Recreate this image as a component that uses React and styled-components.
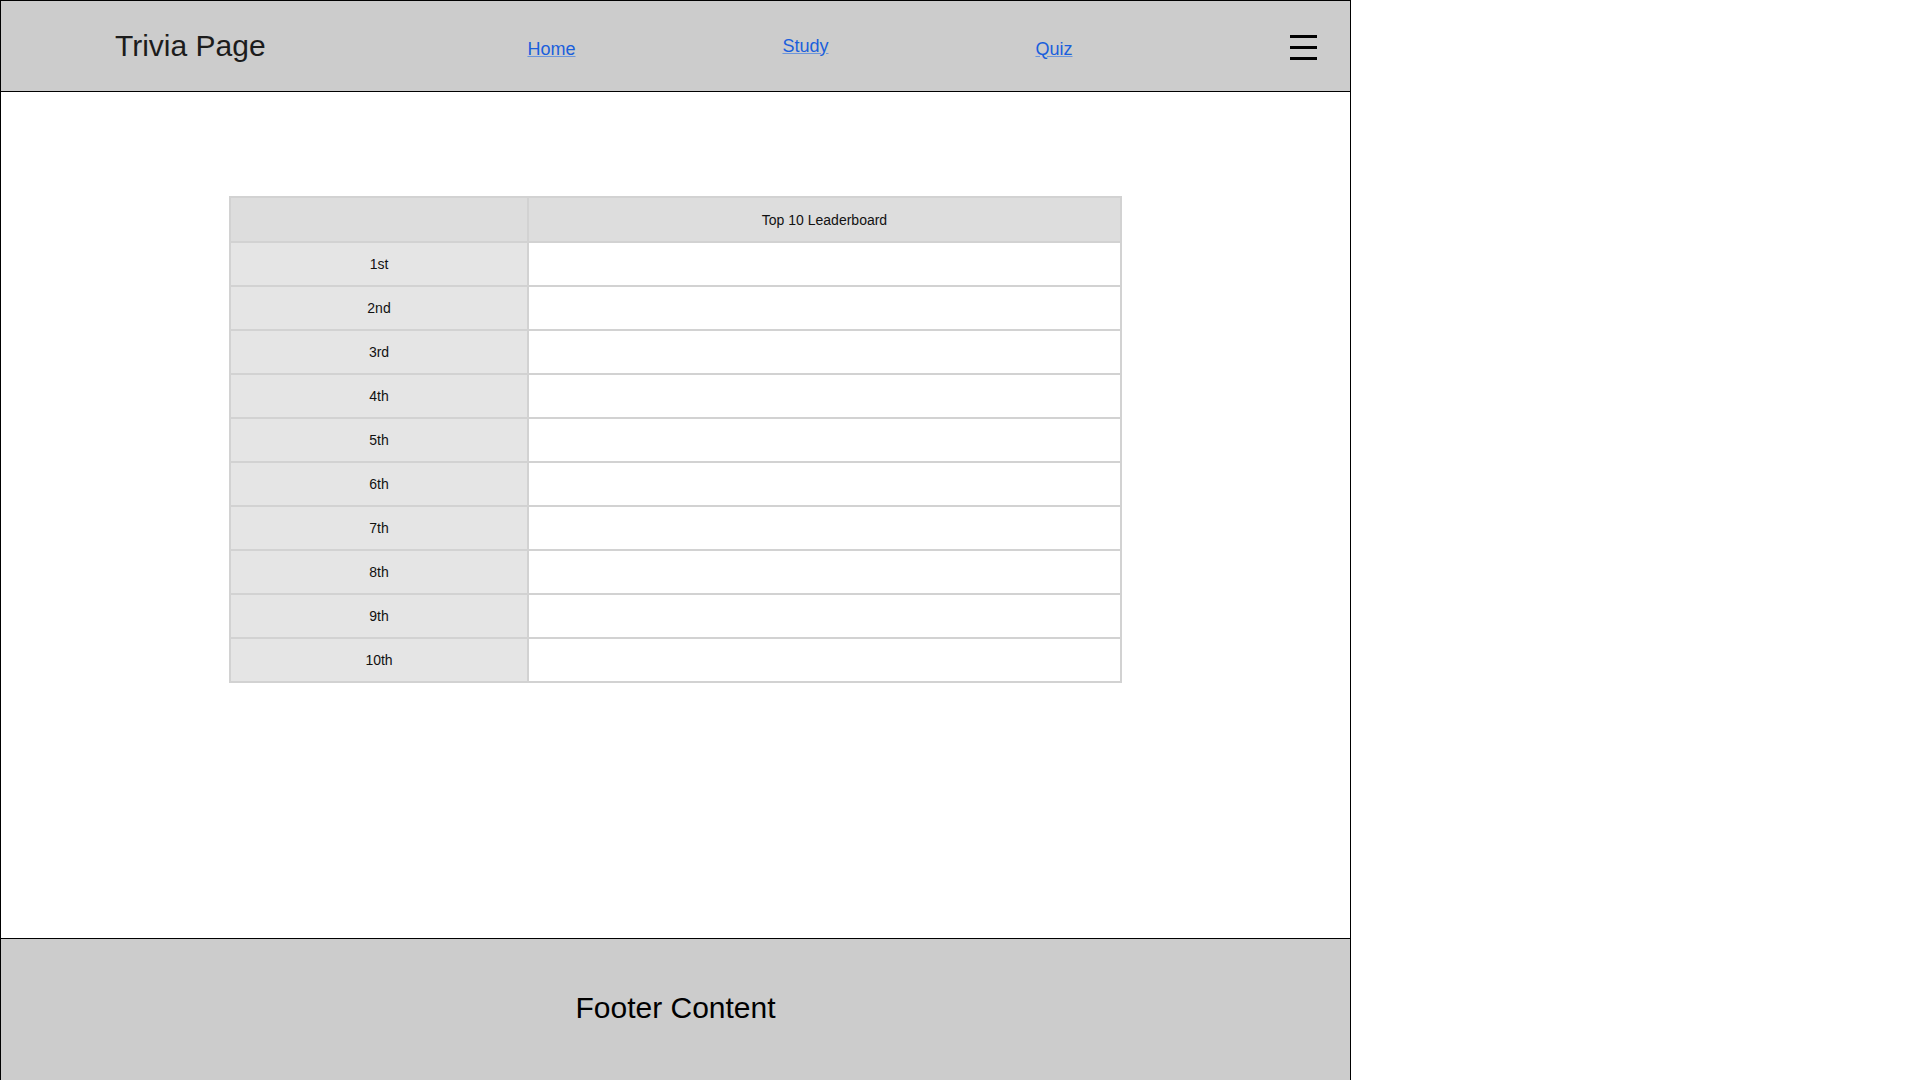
import React from "react";
import styled, { createGlobalStyle } from "styled-components";

const GlobalStyle = createGlobalStyle`
  html, body {
    margin: 0;
    padding: 0;
    background: #ffffff;
    font-family: "Liberation Sans", Arial, sans-serif;
  }
  * {
    box-sizing: border-box;
  }
`;

const places = ["1st", "2nd", "3rd", "4th", "5th", "6th", "7th", "8th", "9th", "10th"];

const navLinks = [
  { label: "Home", drop: 3 },
  { label: "Study", drop: 0 },
  { label: "Quiz", drop: 3 }
];

export default function App() {
  return (
    <>
      <GlobalStyle />
      <PageWrapper>
        <Header>
          <Title>Trivia Page</Title>
          <Nav>
            {navLinks.map(link => (
              <NavLink key={link.label} href="#" $drop={link.drop}>
                {link.label}
              </NavLink>
            ))}
          </Nav>
          <MenuButton aria-label="menu">
            <MenuBar />
            <MenuBar />
            <MenuBar />
          </MenuButton>
        </Header>

        <Main>
          <Leaderboard>
            <thead>
              <tr>
                <HeadCell />
                <HeadCell>Top 10 Leaderboard</HeadCell>
              </tr>
            </thead>
            <tbody>
              {places.map(place => (
                <tr key={place}>
                  <PlaceCell>{place}</PlaceCell>
                  <NameCell />
                </tr>
              ))}
            </tbody>
          </Leaderboard>
        </Main>

        <Footer>
          <FooterText>Footer Content</FooterText>
        </Footer>
      </PageWrapper>
    </>
  );
}

const PageWrapper = styled.div`
  width: 1351px;
  border: 1px solid #000000;
  display: flex;
  flex-direction: column;
`;

const Header = styled.header`
  height: 91px;
  background: #cccccc;
  border-bottom: 1px solid #000000;
  display: flex;
  align-items: center;
`;

const Title = styled.h1`
  margin: 0 0 0 114px;
  width: 309px;
  font-size: 30px;
  font-weight: normal;
  color: #1c1c1c;
  line-height: 1;
`;

const Nav = styled.nav`
  width: 752px;
  display: flex;
  justify-content: space-around;
  align-items: center;
`;

const NavLink = styled.a`
  font-size: 18px;
  color: #1a5fdc;
  text-decoration: underline;
  text-decoration-color: #6c95db;
  margin-top: ${p => p.$drop * 2}px;
`;

const MenuButton = styled.button`
  margin-left: auto;
  margin-right: 33px;
  margin-top: 2px;
  width: 27px;
  padding: 0;
  border: none;
  background: transparent;
  display: flex;
  flex-direction: column;
  gap: 8px;
  cursor: pointer;
`;

const MenuBar = styled.span`
  display: block;
  width: 27px;
  height: 3px;
  background: #000000;
`;

const Main = styled.main`
  height: 846px;
  background: #ffffff;
  padding-top: 104px;
  display: flex;
  justify-content: center;
  align-items: flex-start;
`;

const Leaderboard = styled.table`
  width: 893px;
  border-collapse: collapse;
  font-size: 14px;
  color: #111111;
`;

const HeadCell = styled.th`
  height: 45px;
  background: #dddddd;
  border: 2px solid #d2d2d2;
  font-weight: normal;
  text-align: center;
  padding: 0;

  &:first-child {
    width: 298px;
  }
`;

const PlaceCell = styled.td`
  height: 44px;
  background: #e5e5e5;
  border: 2px solid #d2d2d2;
  text-align: center;
  padding: 0;
`;

const NameCell = styled.td`
  height: 44px;
  background: #ffffff;
  border: 2px solid #d2d2d2;
  padding: 0;
`;

const Footer = styled.footer`
  height: 160px;
  background: #cccccc;
  border-top: 1px solid #000000;
  display: flex;
  justify-content: center;
  padding-top: 52px;
`;

const FooterText = styled.p`
  margin: 0;
  font-size: 30px;
  line-height: 34px;
  color: #000000;
`;
